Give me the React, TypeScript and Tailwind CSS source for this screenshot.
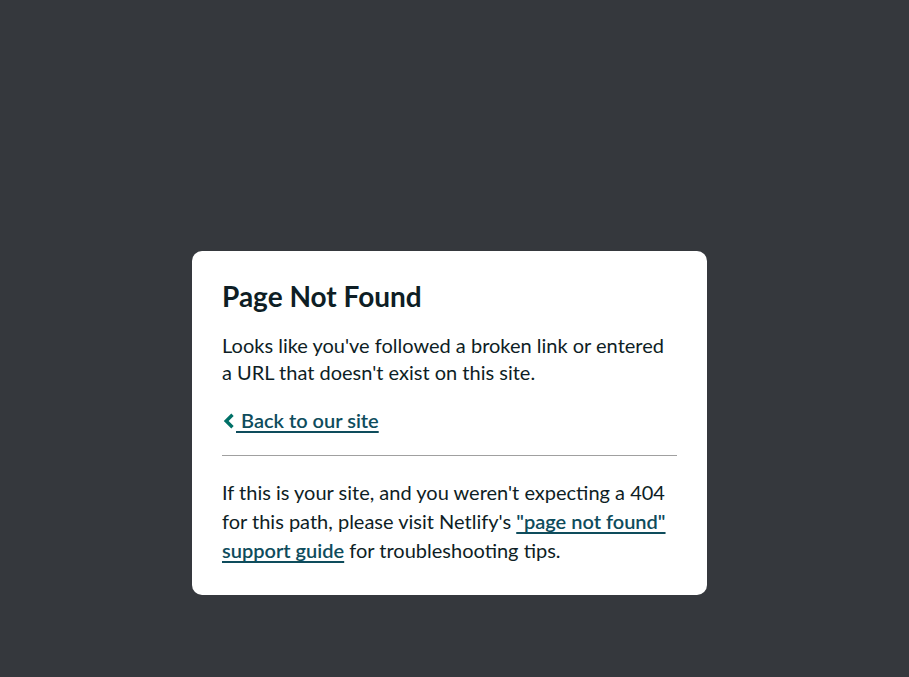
import React from 'react';

const ChevronLeft = () => (
  <svg width="14" height="16" viewBox="0 0 14 16" className="inline-block relative top-[-2px]" aria-hidden="true">
    <path d="M10.5 1.8 L4.2 8 L10.5 14.2" fill="none" stroke="#007067" strokeWidth="3.4" strokeLinecap="butt" strokeLinejoin="miter" />
  </svg>
);

const linkCls =
  'font-semibold underline underline-offset-[3px] decoration-2 [text-decoration-skip-ink:none] text-[#0e4c5c]';

export default function App() {
  return (
    <div className="h-screen w-full bg-[#35383d] flex justify-center pt-[251px] pr-[10px] overflow-hidden font-['Lato','Open_Sans',sans-serif]">
      <div className="w-[515px] h-fit p-[30px] bg-white rounded-[10px] text-[#0e1e25]">
        <h1 className="text-[28px] leading-[30px] font-bold m-0">Page Not Found</h1>
        <p className="mt-[21px] text-[20px] leading-[27px]">
          Looks like you've followed a broken link or entered a URL that doesn't exist on this site.
        </p>
        <p className="mt-[19px] text-[20px] leading-[30px]">
          <a href="#" className={linkCls}>
            <ChevronLeft /> Back to our site
          </a>
        </p>
        <hr className="mt-5 border-0 border-t border-[#a0a0a0]" />
        <p className="mt-[22px] text-[20px] leading-[29px]">
          If this is your site, and you weren't expecting a 404 for this path, please visit Netlify's{' '}
          <a href="#" className={linkCls}>
            "page not found" support guide
          </a>{' '}
          for troubleshooting tips.
        </p>
      </div>
    </div>
  );
}
